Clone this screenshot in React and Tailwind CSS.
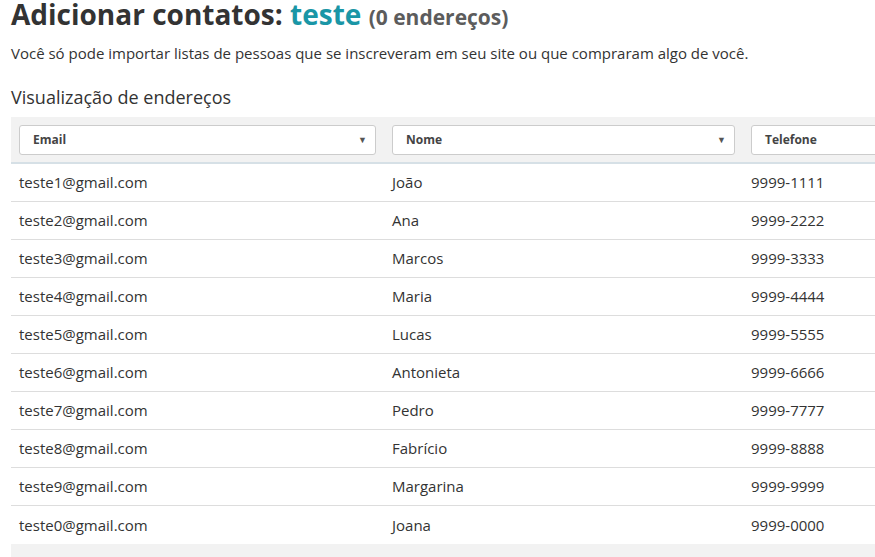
import React from "react";

const rows = [
  ["teste1@gmail.com", "João", "9999-1111"],
  ["teste2@gmail.com", "Ana", "9999-2222"],
  ["teste3@gmail.com", "Marcos", "9999-3333"],
  ["teste4@gmail.com", "Maria", "9999-4444"],
  ["teste5@gmail.com", "Lucas", "9999-5555"],
  ["teste6@gmail.com", "Antonieta", "9999-6666"],
  ["teste7@gmail.com", "Pedro", "9999-7777"],
  ["teste8@gmail.com", "Fabrício", "9999-8888"],
  ["teste9@gmail.com", "Margarina", "9999-9999"],
  ["teste0@gmail.com", "Joana", "9999-0000"],
];

function Select({ label }) {
  return (
    <div className="flex h-[30px] items-center justify-between rounded-[3px] border border-[#cccccc] bg-white pl-[13px] pr-[8px]">
      <span className="text-[12px] font-bold text-[#444]">{label}</span>
      <span className="text-[9px] text-[#555]">▼</span>
    </div>
  );
}

export default function App() {
  return (
    <div
      className="h-[557px] w-[875px] overflow-hidden bg-white text-[#333]"
      style={{ fontFamily: '"Open Sans", sans-serif' }}
    >
      <div className="pl-[11px]">
        <h1 className="mt-[-6px] text-[28px] font-bold leading-[40px] text-[#333]">
          Adicionar contatos: <span className="text-[#1a96a6]">teste</span>{" "}
          <span className="text-[21px] text-[#5c5c5c]">(0 endereços)</span>
        </h1>
        <p className="mt-[6px] text-[15px] leading-[20px] text-[#333]">
          Você só pode importar listas de pessoas que se inscreveram em seu site ou que compraram algo de você.
        </p>
        <h2 className="mt-[22px] text-[18px] leading-[24px] text-[#333]">Visualização de endereços</h2>
        <div className="mt-[8px] w-[1120px]">
          <div className="grid grid-cols-[373px_359px_388px] border-b-2 border-[#d6e0e6] bg-[#f2f2f2] pb-[7px] pt-[8px]">
            <div className="px-[8px]"><Select label="Email" /></div>
            <div className="px-[8px]"><Select label="Nome" /></div>
            <div className="px-[8px]"><Select label="Telefone" /></div>
          </div>
          {rows.map((r, i) => (
            <div
              key={i}
              className={`grid h-[38px] grid-cols-[373px_359px_388px] items-center text-[15px] text-[#333] ${
                i < rows.length - 1 ? "border-b border-[#dddddd]" : ""
              }`}
            >
              <div className="px-[8px]">{r[0]}</div>
              <div className="px-[8px]">{r[1]}</div>
              <div className="px-[8px]">{r[2]}</div>
            </div>
          ))}
          <div className="h-[20px] bg-[#f2f2f2]" />
        </div>
      </div>
    </div>
  );
}
